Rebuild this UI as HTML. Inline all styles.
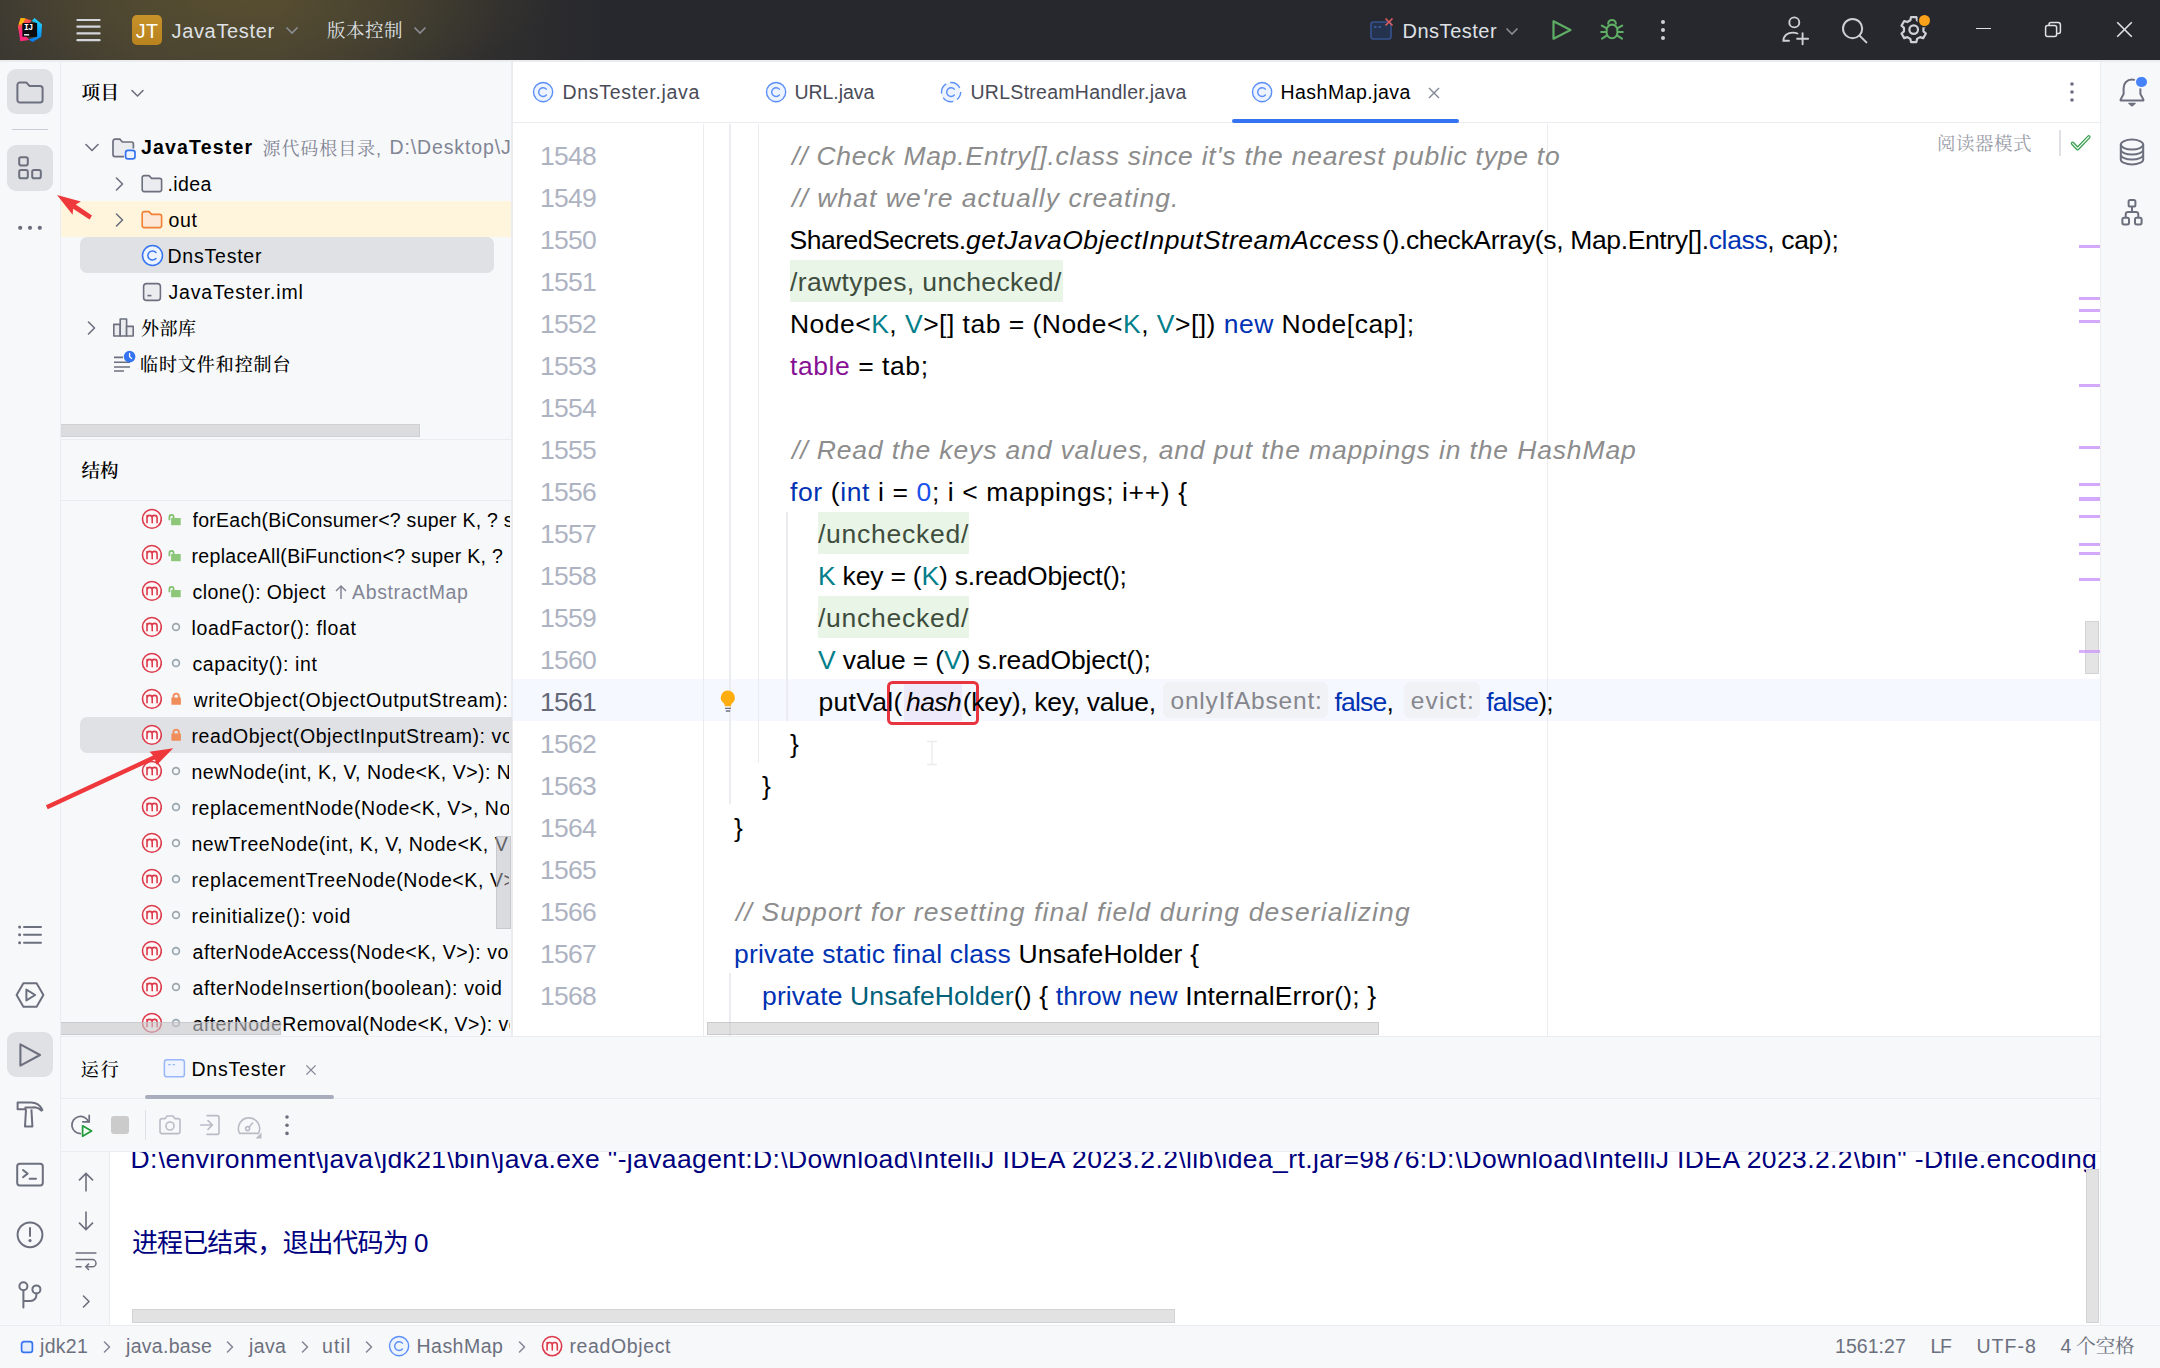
<!DOCTYPE html>
<html lang="zh-CN"><head><meta charset="utf-8"><title>JavaTester – HashMap.java</title><style>
*{margin:0;padding:0;box-sizing:border-box}
html,body{width:2160px;height:1368px;overflow:hidden;background:#f7f8fa}
body{position:relative;font-family:"Liberation Sans","Noto Serif CJK SC",sans-serif}
div,svg,span.t{position:absolute}
span.t{white-space:pre;line-height:1;display:block}
</style></head>
<body>
<div style="left:0px;top:0px;width:2160px;height:60px;background:#27282e;background:radial-gradient(ellipse 310px 85px at 245px 0,rgba(110,96,48,.42),rgba(110,96,48,0) 100%),linear-gradient(90deg,#3b3832 0,#464131 140px,#474131 280px,#3c3930 390px,#2f2e2e 500px,#27282e 610px)"></div>
<div style="left:0px;top:60px;width:2160px;height:1308px;background:#f7f8fa;"></div>
<div style="left:513px;top:61px;width:1587px;height:975px;background:#fff;"></div>
<div style="left:0px;top:60px;width:2160px;height:1.5px;background:#ebecf0;"></div>
<div style="left:60px;top:61px;width:1px;height:1264px;background:#ebecf0;"></div>
<div style="left:511px;top:61px;width:1.5px;height:975px;background:#ebecf0;"></div>
<div style="left:2099.5px;top:61px;width:1.5px;height:1264px;background:#ebecf0;"></div>
<div style="left:513px;top:122px;width:1587px;height:1px;background:#ebecf0;"></div>
<div style="left:61px;top:1035.5px;width:2039px;height:1.5px;background:#ebecf0;"></div>
<div style="left:0px;top:1324.5px;width:2160px;height:1.5px;background:#ebecf0;"></div>
<div style="left:61px;top:439px;width:450px;height:1px;background:#ebecf0;"></div>
<div style="left:61px;top:500px;width:450px;height:1px;background:#ebecf0;"></div>
<div style="left:61px;top:1098px;width:2039px;height:1px;background:#ebecf0;"></div>
<div style="left:61px;top:1151px;width:2039px;height:1px;background:#ebecf0;"></div>
<div style="left:110px;top:1152px;width:1989.5px;height:172.5px;background:#fff;"></div>
<div style="left:109px;top:1152px;width:1px;height:172.5px;background:#ebecf0;"></div>
<svg style="left:17px;top:17px;" width="26" height="26" viewBox="0 0 26 26" fill="none"><defs><linearGradient id="lgA" x1="0" y1="0" x2=".35" y2="1"><stop offset="0" stop-color="#fdb60d"/><stop offset=".28" stop-color="#ff5a3c"/><stop offset=".55" stop-color="#fe2a78"/><stop offset="1" stop-color="#f61f9c"/></linearGradient>
<linearGradient id="lgB" x1=".6" y1="0" x2=".3" y2="1"><stop offset="0" stop-color="#1fd7ff"/><stop offset=".55" stop-color="#0c9bfa"/><stop offset="1" stop-color="#087cfa"/></linearGradient></defs>
<polygon points="3.8,0.9 8.4,1.6 14.7,3.4 12,6.4 5.6,6.4 5.6,19.6 3.2,24.2 2.2,16.4 0.9,9.7" fill="url(#lgA)"/>
<polygon points="3.8,0.9 8.4,1.6 5.2,7.4 1.6,7.6" fill="#fdb60d"/>
<polygon points="14.6,4 17.6,0.9 25,7.6 24.2,19.7 15.5,25 11.6,22.6 19.8,19.8 19.8,6" fill="url(#lgB)"/>
<polygon points="3,24.2 5.6,15.8 12.4,23" fill="#fe2a78"/>
<rect x="5.4" y="6" width="14.7" height="13.8" fill="#0b0b10"/>
<rect x="7" y="17" width="5.2" height="1.6" fill="#dcdce0"/></svg>
<span class="t" style="left:24.00px;top:24.46px;font-size:8.2px;color:#fff;font-family:'Liberation Mono',monospace;font-weight:700;letter-spacing:-.7px">IJ</span>
<svg style="left:75px;top:18px;" width="27" height="24" viewBox="0 0 27 24" fill="none"><path d="M2.4 2H24.6M2.4 8.7H24.6M2.4 15.4H24.6M2.4 22.2H24.6" stroke="#d3d5db" stroke-width="2.2" stroke-linecap="round"/></svg>
<div style="left:132px;top:15px;width:30px;height:30px;background:#c08a22;border-radius:5px;background:linear-gradient(180deg,#c6922a,#b8821e)"></div>
<span class="t" style="left:135.80px;top:21.61px;font-size:19.6px;color:#fff;letter-spacing:.4px">JT</span>
<span class="t" style="left:171.50px;top:21.07px;font-size:20px;color:#dfe1e5;letter-spacing:0.660px;">JavaTester</span>
<svg style="left:285px;top:26px;" width="14" height="9" viewBox="0 0 14 9" fill="none"><path d="M1.5 1.5L7 7L12.5 1.5" stroke="#8b8d95" stroke-width="1.6"/></svg>
<span class="t" style="left:327.00px;top:22.34px;font-size:18.5px;color:#dfe1e5;letter-spacing:0.498px;">版本控制</span>
<svg style="left:413px;top:26px;" width="14" height="9" viewBox="0 0 14 9" fill="none"><path d="M1.5 1.5L7 7L12.5 1.5" stroke="#8b8d95" stroke-width="1.6"/></svg>
<svg style="left:1369px;top:17px;" width="26" height="24" viewBox="0 0 26 24" fill="none"><rect x="2" y="5" width="20" height="17" rx="2.5" fill="#25324d" stroke="#35538f" stroke-width="1.6"/>
<path d="M5 10H7.5M9.5 10H12" stroke="#3f64ad" stroke-width="1.3"/>
<path d="M16.5 1.5L23.5 8.5M23.5 1.5L16.5 8.5" stroke="#db5c5c" stroke-width="1.7"/></svg>
<span class="t" style="left:1402.50px;top:21.07px;font-size:20px;color:#dfe1e5;letter-spacing:0.515px;">DnsTester</span>
<svg style="left:1505px;top:27px;" width="14" height="9" viewBox="0 0 14 9" fill="none"><path d="M1.5 1.5L7 7L12.5 1.5" stroke="#8b8d95" stroke-width="1.6"/></svg>
<svg style="left:1550px;top:18px;" width="24" height="24" viewBox="0 0 24 24" fill="none"><path d="M3.5 3.2V20.8L20.5 12Z" stroke="#5fad65" stroke-width="2.2" stroke-linejoin="round"/></svg>
<svg style="left:1599px;top:17px;" width="26" height="26" viewBox="0 0 26 26" fill="none"><g stroke="#5fad65" stroke-width="2.1" stroke-linecap="round">
<path d="M9.2 6.8a3.8 3.8 0 0 1 7.6 0"/>
<rect x="7.6" y="7.6" width="10.8" height="13.6" rx="5.4"/>
<path d="M7.4 11.2L2.8 8.6M18.6 11.2L23.2 8.6M7.2 15H2.2M18.8 15H23.8M7.6 18.6L3 21.6M18.4 18.6L23 21.6"/></g></svg>
<svg style="left:1659px;top:18px;" width="8" height="24" viewBox="0 0 8 24" fill="none"><g fill="#ced0d6"><circle cx="4" cy="4" r="2"/><circle cx="4" cy="12" r="2"/><circle cx="4" cy="20" r="2"/></g></svg>
<svg style="left:1781px;top:15px;" width="30" height="31" viewBox="0 0 30 31" fill="none"><g stroke="#ced0d6" stroke-width="1.9" stroke-linecap="round"><circle cx="13.3" cy="7.4" r="5"/>
<path d="M8 25.8H2.4c0-5 4.2-8.2 9.4-8.2 1.7 0 3.3.3 4.7.9"/><path d="M21.6 18.2V29.2M16.1 23.7H27.1"/></g></svg>
<svg style="left:1840px;top:16px;" width="30" height="30" viewBox="0 0 30 30" fill="none"><g stroke="#ced0d6" stroke-width="2" stroke-linecap="round"><circle cx="12.6" cy="12.6" r="9.6"/><path d="M19.6 19.6L26.4 26.4"/></g></svg>
<svg style="left:1899px;top:15px;" width="30" height="30" viewBox="0 0 30 30" fill="none"><g stroke="#ced0d6" stroke-width="2.2" stroke-linejoin="round"><path d="M12.04 2.08L17.36 2.08L18.05 5.29L21.09 7.04L24.21 6.04L26.87 10.64L24.44 12.85L24.44 16.35L26.87 18.56L24.21 23.16L21.09 22.16L18.05 23.91L17.36 27.12L12.04 27.12L11.35 23.91L8.31 22.16L5.19 23.16L2.53 18.56L4.96 16.35L4.96 12.85L2.53 10.64L5.19 6.04L8.31 7.04L11.35 5.29Z"/><circle cx="14.7" cy="14.6" r="4.3"/></g></svg>
<div style="left:1918.5px;top:14.5px;width:11px;height:11px;background:#f9a11b;border-radius:50%;box-shadow:0 0 0 1.5px #27282e"></div>
<div style="left:1976px;top:28px;width:15px;height:1.4px;background:#dfe1e5;"></div>
<svg style="left:2044px;top:21px;" width="18" height="17" viewBox="0 0 18 17" fill="none"><g stroke="#dfe1e5" stroke-width="1.5"><rect x="1.6" y="4.4" width="11" height="11" rx="2"/><path d="M5 4.2V3.4a2 2 0 0 1 2-2H14a2.4 2.4 0 0 1 2.4 2.4V10.6a2 2 0 0 1-2 2H13"/></g></svg>
<svg style="left:2116px;top:21px;" width="17" height="17" viewBox="0 0 17 17" fill="none"><path d="M1.2 1.2L15.8 15.8M15.8 1.2L1.2 15.8" stroke="#dfe1e5" stroke-width="1.6"/></svg>
<div style="left:7px;top:69px;width:45.5px;height:45px;background:#dfe1e5;border-radius:9px"></div>
<svg style="left:15px;top:80px;" width="30" height="25" viewBox="0 0 30 25" fill="none"><path d="M2.4 5a2.6 2.6 0 0 1 2.6-2.6H11.2l3.4 3.6H25a2.6 2.6 0 0 1 2.6 2.6V20a2.6 2.6 0 0 1-2.6 2.6H5A2.6 2.6 0 0 1 2.4 20Z" stroke="#6c707e" stroke-width="2" stroke-linejoin="round"/></svg>
<div style="left:12px;top:129px;width:36px;height:1px;background:#c9ccd6;"></div>
<div style="left:7px;top:145px;width:45.5px;height:45.5px;background:#dfe1e5;border-radius:9px"></div>
<svg style="left:17px;top:155px;" width="26" height="26" viewBox="0 0 26 26" fill="none"><g stroke="#6c707e" stroke-width="2"><rect x="2.2" y="2.2" width="8.6" height="8.2" rx="1.8"/><rect x="2.2" y="15" width="8.6" height="8.2" rx="1.8"/><rect x="15.2" y="15" width="8.6" height="8.2" rx="1.8"/></g></svg>
<svg style="left:17px;top:224px;" width="26" height="8" viewBox="0 0 26 8" fill="none"><g fill="#6c707e"><circle cx="3.2" cy="3.8" r="2.1"/><circle cx="13" cy="3.8" r="2.1"/><circle cx="22.8" cy="3.8" r="2.1"/></g></svg>
<svg style="left:17px;top:923px;" width="28" height="24" viewBox="0 0 28 24" fill="none"><g stroke="#6c707e" stroke-width="2" stroke-linecap="round"><path d="M7 4H24M7 11.8H24M7 19.7H24"/></g><g fill="#6c707e"><circle cx="2.6" cy="4" r="1.5"/><circle cx="2.6" cy="11.8" r="1.5"/><circle cx="2.6" cy="19.7" r="1.5"/></g></svg>
<svg style="left:15px;top:981px;" width="30" height="28" viewBox="0 0 30 28" fill="none"><g stroke="#6c707e" stroke-width="2" stroke-linejoin="round"><path d="M1.6 14L8.4 2.2H21.6L28.4 14L21.6 25.8H8.4Z"/><path d="M11.4 8.6V19.4L20.2 14Z"/></g></svg>
<div style="left:7px;top:1032px;width:45.5px;height:45px;background:#dfe1e5;border-radius:9px"></div>
<svg style="left:17px;top:1041px;" width="26" height="28" viewBox="0 0 26 28" fill="none"><path d="M3.4 3.4V24.6L23 14Z" stroke="#6c707e" stroke-width="2.1" stroke-linejoin="round"/></svg>
<svg style="left:15px;top:1099px;" width="30" height="31" viewBox="0 0 30 31" fill="none"><g stroke="#6c707e" stroke-width="2" stroke-linejoin="round"><path d="M2.6 3.6H16c5.4 0 9.2 2.6 11.4 7.4l-1 .6c-2.4-2.6-5-3.4-8-3.4V8.4H10.4V10.2H2.6Z"/><path d="M11 10.4L10 27.6H17.4L16.4 10.4"/></g></svg>
<svg style="left:15px;top:1161px;" width="30" height="28" viewBox="0 0 30 28" fill="none"><g stroke="#6c707e" stroke-width="2" stroke-linejoin="round" stroke-linecap="round"><rect x="2.2" y="2.8" width="25.6" height="21.6" rx="2.6"/><path d="M8 9L12.6 12.6L8 16.2M14.6 17.8H21"/></g></svg>
<svg style="left:15px;top:1220px;" width="30" height="30" viewBox="0 0 30 30" fill="none"><g stroke="#6c707e" stroke-width="2" stroke-linecap="round"><circle cx="15" cy="14.8" r="12.4"/><path d="M15 8V16"/></g><circle cx="15" cy="20.6" r="1.6" fill="#6c707e"/></svg>
<svg style="left:15px;top:1279px;" width="30" height="32" viewBox="0 0 30 32" fill="none"><g stroke="#6c707e" stroke-width="2" stroke-linecap="round"><circle cx="8.4" cy="7.2" r="4"/><circle cx="21.4" cy="10.4" r="4"/><path d="M8.4 11.4V28.4M8.4 22H15.4c3.4 0 6-2.6 6-6V14.6"/></g></svg>
<svg style="left:2117px;top:76px;" width="32" height="34" viewBox="0 0 32 34" fill="none"><g stroke="#6c707e" stroke-width="2" stroke-linejoin="round" stroke-linecap="round"><path d="M15 3.6c-5 0-8.4 3.6-8.4 8.6V18L3.6 23.6V24.6H26.4V23.6L23.4 18V12.2C23.4 7.2 20 3.6 15 3.6Z"/></g><path d="M11.8 27.4H18.2L15 30Z" fill="#6c707e" stroke="#6c707e" stroke-width="1.2" stroke-linejoin="round"/></svg>
<div style="left:2136px;top:76.5px;width:10.8px;height:10.8px;background:#4682fa;border-radius:50%;box-shadow:0 0 0 1.5px #f7f8fa"></div>
<svg style="left:2118px;top:137px;" width="28" height="30" viewBox="0 0 28 30" fill="none"><g stroke="#6c707e" stroke-width="2"><ellipse cx="14" cy="7.6" rx="11.2" ry="5"/><path d="M2.8 7.6V22.4c0 2.8 5 5 11.2 5s11.2-2.2 11.2-5V7.6"/><path d="M2.8 12.6c0 2.8 5 5 11.2 5s11.2-2.2 11.2-5M2.8 17.6c0 2.8 5 5 11.2 5s11.2-2.2 11.2-5"/></g></svg>
<svg style="left:2119px;top:198px;" width="26" height="30" viewBox="0 0 26 30" fill="none"><g stroke="#6c707e" stroke-width="2"><rect x="9.6" y="2" width="6.8" height="6.6" rx="1.6"/><rect x="3.4" y="19.8" width="6.6" height="6.6" rx="1.6"/><rect x="16" y="19.8" width="6.6" height="6.6" rx="1.6"/><path d="M13 8.8V14M6.7 19.6V16.4a2.4 2.4 0 0 1 2.4-2.4H16.9a2.4 2.4 0 0 1 2.4 2.4V19.6"/></g></svg>
<span class="t" style="left:81.50px;top:83.84px;font-size:18.5px;color:#000;font-weight:600;letter-spacing:0.485px;">项目</span>
<svg style="left:131.0px;top:88.75px;" width="13" height="8.5" viewBox="0 0 13 8.5" fill="none"><path d="M1 1.5L6.5 7.0L12 1.5" stroke="#6c707e" stroke-width="1.6" stroke-linecap="round" stroke-linejoin="round"/></svg>
<div style="left:61px;top:201px;width:450px;height:36px;background:#fff4dc;"></div>
<div style="left:80px;top:237px;width:413.5px;height:35.5px;background:#dfe1e5;border-radius:7px"></div>
<svg style="left:85.0px;top:143.0px;" width="14" height="9.0" viewBox="0 0 14 9.0" fill="none"><path d="M1 1.5L7.0 7.5L13 1.5" stroke="#6c707e" stroke-width="1.6" stroke-linecap="round" stroke-linejoin="round"/></svg>
<svg style="left:111px;top:137px;" width="26" height="23" viewBox="0 0 26 23" fill="none"><path d="M22.4 11.6V7a2 2 0 0 0-2-2H11.4L8.8 2.2H4a2 2 0 0 0-2 2V17.6a2 2 0 0 0 2 2H13" stroke="#6c707e" stroke-width="1.7" fill="#ebecf0" stroke-linejoin="round"/><rect x="14.6" y="13.4" width="9.4" height="8.4" rx="2.4" stroke="#3574f0" fill="#edf3ff" stroke-width="1.7"/></svg>
<span class="t" style="left:141.00px;top:138.49px;font-size:19.5px;color:#000;font-weight:700;letter-spacing:1.181px;">JavaTester</span>
<span class="t" style="left:262.50px;top:139.76px;font-size:18px;color:#818594;letter-spacing:0.915px;">源代码根目录,</span>
<span class="t" style="left:389.50px;top:138.49px;font-size:19.5px;color:#818594;letter-spacing:0.875px;width:120.5px;overflow:hidden;">D:\Desktop\JavaTester</span>
<svg style="left:115.0px;top:176.5px;" width="9.0" height="14" viewBox="0 0 9.0 14" fill="none"><path d="M1.5 1L7.5 7.0L1.5 13" stroke="#6c707e" stroke-width="1.6" stroke-linecap="round" stroke-linejoin="round"/></svg>
<svg style="left:141px;top:173.5px;" width="22" height="19" viewBox="0 0 22 19" fill="none"><path d="M1.2 3.6a2 2 0 0 1 2-2H8l2.6 2.8h8a2 2 0 0 1 2 2V15.6a2 2 0 0 1-2 2H3.2a2 2 0 0 1-2-2Z" stroke="#6c707e" fill="#ebecf0" stroke-width="1.6" stroke-linejoin="round"/></svg>
<span class="t" style="left:167.50px;top:174.99px;font-size:19.5px;color:#000;letter-spacing:0.390px;">.idea</span>
<svg style="left:115.0px;top:212.5px;" width="9.0" height="14" viewBox="0 0 9.0 14" fill="none"><path d="M1.5 1L7.5 7.0L1.5 13" stroke="#6c707e" stroke-width="1.6" stroke-linecap="round" stroke-linejoin="round"/></svg>
<svg style="left:141px;top:209.5px;" width="22" height="19" viewBox="0 0 22 19" fill="none"><path d="M1.2 3.6a2 2 0 0 1 2-2H8l2.6 2.8h8a2 2 0 0 1 2 2V15.6a2 2 0 0 1-2 2H3.2a2 2 0 0 1-2-2Z" stroke="#ee8133" fill="#fde8d8" stroke-width="1.6" stroke-linejoin="round"/></svg>
<span class="t" style="left:168.50px;top:210.99px;font-size:19.5px;color:#000;letter-spacing:0.654px;">out</span>
<svg style="left:140.5px;top:243.7px;" width="23" height="23" viewBox="0 0 23 23" fill="none"><circle cx="11.5" cy="11.5" r="10" stroke="#3574f0" stroke-width="1.5" fill="#edf3ff"/><path d="M14.90 8.42A4.6 4.6 0 1 0 14.90 14.58" stroke="#3574f0" stroke-width="1.5" stroke-linecap="round"/></svg>
<span class="t" style="left:167.50px;top:246.99px;font-size:19.5px;color:#000;letter-spacing:0.776px;">DnsTester</span>
<svg style="left:142px;top:282px;" width="20" height="20" viewBox="0 0 20 20" fill="none"><rect x="1.6" y="1.6" width="16.8" height="16.8" rx="3" stroke="#6c707e" stroke-width="1.6" fill="#ebecf0"/><path d="M5.4 13.6H9.4" stroke="#6c707e" stroke-width="1.6"/></svg>
<span class="t" style="left:168.50px;top:282.99px;font-size:19.5px;color:#000;letter-spacing:0.829px;">JavaTester.iml</span>
<svg style="left:87.0px;top:320.5px;" width="9.0" height="14" viewBox="0 0 9.0 14" fill="none"><path d="M1.5 1L7.5 7.0L1.5 13" stroke="#6c707e" stroke-width="1.6" stroke-linecap="round" stroke-linejoin="round"/></svg>
<svg style="left:112px;top:317px;" width="23" height="21" viewBox="0 0 23 21" fill="none"><g stroke="#6c707e" stroke-width="1.6" fill="#ebecf0" stroke-linejoin="round"><path d="M1.8 7.4H8.2V19H1.8Z"/><path d="M8.2 2H14.6V19H8.2Z"/><path d="M14.6 9.4H21.2V19H14.6Z"/></g></svg>
<span class="t" style="left:141.00px;top:319.76px;font-size:18px;color:#000;font-weight:500;letter-spacing:0.500px;">外部库</span>
<svg style="left:112px;top:350px;" width="25" height="22" viewBox="0 0 25 22" fill="none"><g stroke="#6c707e" stroke-width="1.6"><path d="M2 7.4H11M2 12.2H18M2 17H18M2 21H12"/></g><circle cx="17.6" cy="6.6" r="5.8" fill="#3574f0"/><path d="M17.6 3.4V6.8L19.6 8.4" stroke="#fff" stroke-width="1.3" stroke-linecap="round"/></svg>
<span class="t" style="left:140.00px;top:355.76px;font-size:18px;color:#000;font-weight:500;letter-spacing:0.928px;">临时文件和控制台</span>
<div style="left:61px;top:423.5px;width:358.5px;height:13.5px;background:#dcdcde;border:1px solid #d0d0d3;border-left:0"></div>
<span class="t" style="left:81.50px;top:461.84px;font-size:18.5px;color:#000;font-weight:600;letter-spacing:-0.015px;">结构</span>
<div style="left:79.5px;top:717.2px;width:432.5px;height:35.8px;background:#dfe1e5;border-radius:7px 0 0 7px"></div>
<svg style="left:140.7px;top:508.0px;" width="21.8" height="21.8" viewBox="0 0 21.8 21.8" fill="none"><circle cx="10.9" cy="10.9" r="9.4" stroke="#db3b4b" stroke-width="1.6" fill="#fff7f7"/><path d="M6.012 14.66V7.516M6.012 9.96a2.6 2.6 0 0 1 5.2 0V14.66M10.9 9.96a2.6 2.6 0 0 1 5.2 0V14.66" stroke="#db3b4b" stroke-width="1.6" stroke-linecap="round" transform="scale(1)"/></svg>
<svg style="left:168px;top:510.5px;" width="16" height="18" viewBox="0 0 16 18" fill="none"><path d="M1.4 9.2V5.9a2.1 2.1 0 0 1 4.2 0V7.2" stroke="#7dc06a" stroke-width="1.7"/><rect x="3.1" y="7" width="9.6" height="7.2" fill="#8ec77a"/></svg>
<span class="t" style="left:192.50px;top:511.49px;font-size:19.5px;color:#000;letter-spacing:0.261px;width:317.6px;overflow:hidden;">forEach(BiConsumer&lt;? super K, ? super V&gt;): void</span>
<svg style="left:140.7px;top:544.0px;" width="21.8" height="21.8" viewBox="0 0 21.8 21.8" fill="none"><circle cx="10.9" cy="10.9" r="9.4" stroke="#db3b4b" stroke-width="1.6" fill="#fff7f7"/><path d="M6.012 14.66V7.516M6.012 9.96a2.6 2.6 0 0 1 5.2 0V14.66M10.9 9.96a2.6 2.6 0 0 1 5.2 0V14.66" stroke="#db3b4b" stroke-width="1.6" stroke-linecap="round" transform="scale(1)"/></svg>
<svg style="left:168px;top:546.5px;" width="16" height="18" viewBox="0 0 16 18" fill="none"><path d="M1.4 9.2V5.9a2.1 2.1 0 0 1 4.2 0V7.2" stroke="#7dc06a" stroke-width="1.7"/><rect x="3.1" y="7" width="9.6" height="7.2" fill="#8ec77a"/></svg>
<span class="t" style="left:191.50px;top:547.49px;font-size:19.5px;color:#000;letter-spacing:0.320px;width:317.6px;overflow:hidden;">replaceAll(BiFunction&lt;? super K, ? super V, ? extends V&gt;): void</span>
<svg style="left:140.7px;top:580.0px;" width="21.8" height="21.8" viewBox="0 0 21.8 21.8" fill="none"><circle cx="10.9" cy="10.9" r="9.4" stroke="#db3b4b" stroke-width="1.6" fill="#fff7f7"/><path d="M6.012 14.66V7.516M6.012 9.96a2.6 2.6 0 0 1 5.2 0V14.66M10.9 9.96a2.6 2.6 0 0 1 5.2 0V14.66" stroke="#db3b4b" stroke-width="1.6" stroke-linecap="round" transform="scale(1)"/></svg>
<svg style="left:168px;top:582.5px;" width="16" height="18" viewBox="0 0 16 18" fill="none"><path d="M1.4 9.2V5.9a2.1 2.1 0 0 1 4.2 0V7.2" stroke="#7dc06a" stroke-width="1.7"/><rect x="3.1" y="7" width="9.6" height="7.2" fill="#8ec77a"/></svg>
<span class="t" style="left:192.50px;top:583.49px;font-size:19.5px;color:#000;letter-spacing:0.436px;">clone(): Object</span>
<svg style="left:140.7px;top:616.0px;" width="21.8" height="21.8" viewBox="0 0 21.8 21.8" fill="none"><circle cx="10.9" cy="10.9" r="9.4" stroke="#db3b4b" stroke-width="1.6" fill="#fff7f7"/><path d="M6.012 14.66V7.516M6.012 9.96a2.6 2.6 0 0 1 5.2 0V14.66M10.9 9.96a2.6 2.6 0 0 1 5.2 0V14.66" stroke="#db3b4b" stroke-width="1.6" stroke-linecap="round" transform="scale(1)"/></svg>
<svg style="left:170px;top:620.8px;" width="12" height="12" viewBox="0 0 12 12" fill="none"><circle cx="6" cy="6" r="3.4" stroke="#9aa7b0" stroke-width="1.7"/></svg>
<span class="t" style="left:191.50px;top:619.49px;font-size:19.5px;color:#000;letter-spacing:0.645px;">loadFactor(): float</span>
<svg style="left:140.7px;top:652.0px;" width="21.8" height="21.8" viewBox="0 0 21.8 21.8" fill="none"><circle cx="10.9" cy="10.9" r="9.4" stroke="#db3b4b" stroke-width="1.6" fill="#fff7f7"/><path d="M6.012 14.66V7.516M6.012 9.96a2.6 2.6 0 0 1 5.2 0V14.66M10.9 9.96a2.6 2.6 0 0 1 5.2 0V14.66" stroke="#db3b4b" stroke-width="1.6" stroke-linecap="round" transform="scale(1)"/></svg>
<svg style="left:170px;top:656.8px;" width="12" height="12" viewBox="0 0 12 12" fill="none"><circle cx="6" cy="6" r="3.4" stroke="#9aa7b0" stroke-width="1.7"/></svg>
<span class="t" style="left:192.50px;top:655.49px;font-size:19.5px;color:#000;letter-spacing:0.604px;">capacity(): int</span>
<svg style="left:140.7px;top:688.0px;" width="21.8" height="21.8" viewBox="0 0 21.8 21.8" fill="none"><circle cx="10.9" cy="10.9" r="9.4" stroke="#db3b4b" stroke-width="1.6" fill="#fff7f7"/><path d="M6.012 14.66V7.516M6.012 9.96a2.6 2.6 0 0 1 5.2 0V14.66M10.9 9.96a2.6 2.6 0 0 1 5.2 0V14.66" stroke="#db3b4b" stroke-width="1.6" stroke-linecap="round" transform="scale(1)"/></svg>
<svg style="left:169px;top:690.5px;" width="14" height="18" viewBox="0 0 14 18" fill="none"><path d="M4.45 7V5.3a2.7 2.7 0 0 1 5.4 0V7" stroke="#f08d5a" stroke-width="1.9"/><rect x="2.4" y="6.6" width="9.5" height="7.2" rx=".5" fill="#f08d5a"/></svg>
<span class="t" style="left:193.50px;top:691.49px;font-size:19.5px;color:#000;letter-spacing:0.669px;width:317.6px;overflow:hidden;">writeObject(ObjectOutputStream): void</span>
<svg style="left:140.7px;top:724.0px;" width="21.8" height="21.8" viewBox="0 0 21.8 21.8" fill="none"><circle cx="10.9" cy="10.9" r="9.4" stroke="#db3b4b" stroke-width="1.6" fill="#fff7f7"/><path d="M6.012 14.66V7.516M6.012 9.96a2.6 2.6 0 0 1 5.2 0V14.66M10.9 9.96a2.6 2.6 0 0 1 5.2 0V14.66" stroke="#db3b4b" stroke-width="1.6" stroke-linecap="round" transform="scale(1)"/></svg>
<svg style="left:169px;top:726.5px;" width="14" height="18" viewBox="0 0 14 18" fill="none"><path d="M4.45 7V5.3a2.7 2.7 0 0 1 5.4 0V7" stroke="#f08d5a" stroke-width="1.9"/><rect x="2.4" y="6.6" width="9.5" height="7.2" rx=".5" fill="#f08d5a"/></svg>
<span class="t" style="left:191.50px;top:727.49px;font-size:19.5px;color:#000;letter-spacing:0.591px;width:317.6px;overflow:hidden;">readObject(ObjectInputStream): void</span>
<svg style="left:140.7px;top:760.0px;" width="21.8" height="21.8" viewBox="0 0 21.8 21.8" fill="none"><circle cx="10.9" cy="10.9" r="9.4" stroke="#db3b4b" stroke-width="1.6" fill="#fff7f7"/><path d="M6.012 14.66V7.516M6.012 9.96a2.6 2.6 0 0 1 5.2 0V14.66M10.9 9.96a2.6 2.6 0 0 1 5.2 0V14.66" stroke="#db3b4b" stroke-width="1.6" stroke-linecap="round" transform="scale(1)"/></svg>
<svg style="left:170px;top:764.8px;" width="12" height="12" viewBox="0 0 12 12" fill="none"><circle cx="6" cy="6" r="3.4" stroke="#9aa7b0" stroke-width="1.7"/></svg>
<span class="t" style="left:191.50px;top:763.49px;font-size:19.5px;color:#000;letter-spacing:0.485px;width:317.6px;overflow:hidden;">newNode(int, K, V, Node&lt;K, V&gt;): Node&lt;K, V&gt;</span>
<svg style="left:140.7px;top:796.0px;" width="21.8" height="21.8" viewBox="0 0 21.8 21.8" fill="none"><circle cx="10.9" cy="10.9" r="9.4" stroke="#db3b4b" stroke-width="1.6" fill="#fff7f7"/><path d="M6.012 14.66V7.516M6.012 9.96a2.6 2.6 0 0 1 5.2 0V14.66M10.9 9.96a2.6 2.6 0 0 1 5.2 0V14.66" stroke="#db3b4b" stroke-width="1.6" stroke-linecap="round" transform="scale(1)"/></svg>
<svg style="left:170px;top:800.8px;" width="12" height="12" viewBox="0 0 12 12" fill="none"><circle cx="6" cy="6" r="3.4" stroke="#9aa7b0" stroke-width="1.7"/></svg>
<span class="t" style="left:191.50px;top:799.49px;font-size:19.5px;color:#000;letter-spacing:0.567px;width:317.6px;overflow:hidden;">replacementNode(Node&lt;K, V&gt;, Node&lt;K, V&gt;): Node&lt;K, V&gt;</span>
<svg style="left:140.7px;top:832.0px;" width="21.8" height="21.8" viewBox="0 0 21.8 21.8" fill="none"><circle cx="10.9" cy="10.9" r="9.4" stroke="#db3b4b" stroke-width="1.6" fill="#fff7f7"/><path d="M6.012 14.66V7.516M6.012 9.96a2.6 2.6 0 0 1 5.2 0V14.66M10.9 9.96a2.6 2.6 0 0 1 5.2 0V14.66" stroke="#db3b4b" stroke-width="1.6" stroke-linecap="round" transform="scale(1)"/></svg>
<svg style="left:170px;top:836.8px;" width="12" height="12" viewBox="0 0 12 12" fill="none"><circle cx="6" cy="6" r="3.4" stroke="#9aa7b0" stroke-width="1.7"/></svg>
<span class="t" style="left:191.50px;top:835.49px;font-size:19.5px;color:#000;letter-spacing:0.509px;width:317.6px;overflow:hidden;">newTreeNode(int, K, V, Node&lt;K, V&gt;): TreeNode&lt;K, V&gt;</span>
<svg style="left:140.7px;top:868.0px;" width="21.8" height="21.8" viewBox="0 0 21.8 21.8" fill="none"><circle cx="10.9" cy="10.9" r="9.4" stroke="#db3b4b" stroke-width="1.6" fill="#fff7f7"/><path d="M6.012 14.66V7.516M6.012 9.96a2.6 2.6 0 0 1 5.2 0V14.66M10.9 9.96a2.6 2.6 0 0 1 5.2 0V14.66" stroke="#db3b4b" stroke-width="1.6" stroke-linecap="round" transform="scale(1)"/></svg>
<svg style="left:170px;top:872.8px;" width="12" height="12" viewBox="0 0 12 12" fill="none"><circle cx="6" cy="6" r="3.4" stroke="#9aa7b0" stroke-width="1.7"/></svg>
<span class="t" style="left:191.50px;top:871.49px;font-size:19.5px;color:#000;letter-spacing:0.602px;width:317.6px;overflow:hidden;">replacementTreeNode(Node&lt;K, V&gt;, Node&lt;K, V&gt;): TreeNode&lt;K, V&gt;</span>
<svg style="left:140.7px;top:904.0px;" width="21.8" height="21.8" viewBox="0 0 21.8 21.8" fill="none"><circle cx="10.9" cy="10.9" r="9.4" stroke="#db3b4b" stroke-width="1.6" fill="#fff7f7"/><path d="M6.012 14.66V7.516M6.012 9.96a2.6 2.6 0 0 1 5.2 0V14.66M10.9 9.96a2.6 2.6 0 0 1 5.2 0V14.66" stroke="#db3b4b" stroke-width="1.6" stroke-linecap="round" transform="scale(1)"/></svg>
<svg style="left:170px;top:908.8px;" width="12" height="12" viewBox="0 0 12 12" fill="none"><circle cx="6" cy="6" r="3.4" stroke="#9aa7b0" stroke-width="1.7"/></svg>
<span class="t" style="left:191.50px;top:907.49px;font-size:19.5px;color:#000;letter-spacing:0.660px;">reinitialize(): void</span>
<svg style="left:140.7px;top:940.0px;" width="21.8" height="21.8" viewBox="0 0 21.8 21.8" fill="none"><circle cx="10.9" cy="10.9" r="9.4" stroke="#db3b4b" stroke-width="1.6" fill="#fff7f7"/><path d="M6.012 14.66V7.516M6.012 9.96a2.6 2.6 0 0 1 5.2 0V14.66M10.9 9.96a2.6 2.6 0 0 1 5.2 0V14.66" stroke="#db3b4b" stroke-width="1.6" stroke-linecap="round" transform="scale(1)"/></svg>
<svg style="left:170px;top:944.8px;" width="12" height="12" viewBox="0 0 12 12" fill="none"><circle cx="6" cy="6" r="3.4" stroke="#9aa7b0" stroke-width="1.7"/></svg>
<span class="t" style="left:192.50px;top:943.49px;font-size:19.5px;color:#000;letter-spacing:0.560px;width:317.6px;overflow:hidden;">afterNodeAccess(Node&lt;K, V&gt;): void</span>
<svg style="left:140.7px;top:976.0px;" width="21.8" height="21.8" viewBox="0 0 21.8 21.8" fill="none"><circle cx="10.9" cy="10.9" r="9.4" stroke="#db3b4b" stroke-width="1.6" fill="#fff7f7"/><path d="M6.012 14.66V7.516M6.012 9.96a2.6 2.6 0 0 1 5.2 0V14.66M10.9 9.96a2.6 2.6 0 0 1 5.2 0V14.66" stroke="#db3b4b" stroke-width="1.6" stroke-linecap="round" transform="scale(1)"/></svg>
<svg style="left:170px;top:980.8px;" width="12" height="12" viewBox="0 0 12 12" fill="none"><circle cx="6" cy="6" r="3.4" stroke="#9aa7b0" stroke-width="1.7"/></svg>
<span class="t" style="left:192.50px;top:979.49px;font-size:19.5px;color:#000;letter-spacing:0.622px;">afterNodeInsertion(boolean): void</span>
<svg style="left:140.7px;top:1012.0px;" width="21.8" height="21.8" viewBox="0 0 21.8 21.8" fill="none"><circle cx="10.9" cy="10.9" r="9.4" stroke="#db3b4b" stroke-width="1.6" fill="#fff7f7"/><path d="M6.012 14.66V7.516M6.012 9.96a2.6 2.6 0 0 1 5.2 0V14.66M10.9 9.96a2.6 2.6 0 0 1 5.2 0V14.66" stroke="#db3b4b" stroke-width="1.6" stroke-linecap="round" transform="scale(1)"/></svg>
<svg style="left:170px;top:1016.8px;" width="12" height="12" viewBox="0 0 12 12" fill="none"><circle cx="6" cy="6" r="3.4" stroke="#9aa7b0" stroke-width="1.7"/></svg>
<span class="t" style="left:192.50px;top:1015.49px;font-size:19.5px;color:#000;letter-spacing:0.448px;width:317.6px;overflow:hidden;">afterNodeRemoval(Node&lt;K, V&gt;): void</span>
<svg style="left:334px;top:583px;" width="14" height="18" viewBox="0 0 14 18" fill="none"><path d="M7 16V3M2 8L7 3L12 8" stroke="#818594" stroke-width="1.5"/></svg>
<span class="t" style="left:352.00px;top:583.49px;font-size:19.5px;color:#818594;letter-spacing:0.639px;">AbstractMap</span>
<div style="left:496px;top:836px;width:14.5px;height:93px;background:rgba(190,190,195,.5);border:1px solid rgba(170,170,178,.35)"></div>
<div style="left:61px;top:1021.5px;width:220px;height:13.5px;background:rgba(200,200,203,.6);border:1px solid rgba(190,190,195,.6);border-left:0"></div>
<svg style="left:50px;top:188px;" width="50" height="36" viewBox="0 0 50 36" fill="none"><polygon points="7,7 30.9,13.5 25.7,16.6 42,27.6 39.6,31.6 23.1,20.7 22.6,26.8" fill="#ee383b"/></svg>
<svg style="left:40px;top:740px;" width="145" height="75" viewBox="0 0 145 75" fill="none"><polygon points="5.9,65.2 113.1,15.6 109.6,11.8 133.2,8.2 116.8,25 114.9,19.6 7.7,69.2" fill="#ee383b"/></svg>
<svg style="left:531.9px;top:81.2px;" width="22.2" height="22.2" viewBox="0 0 22.2 22.2" fill="none"><circle cx="11.1" cy="11.1" r="9.6" stroke="#5a8ff7" stroke-width="1.4" fill="#edf3ff"/><path d="M14.36 8.15A4.4 4.4 0 1 0 14.36 14.05" stroke="#5a8ff7" stroke-width="1.4" stroke-linecap="round"/></svg>
<span class="t" style="left:562.50px;top:82.99px;font-size:19.5px;color:#494b57;letter-spacing:0.688px;">DnsTester.java</span>
<svg style="left:764.6px;top:81.2px;" width="22.2" height="22.2" viewBox="0 0 22.2 22.2" fill="none"><circle cx="11.1" cy="11.1" r="9.6" stroke="#5a8ff7" stroke-width="1.4" fill="#edf3ff"/><path d="M14.36 8.15A4.4 4.4 0 1 0 14.36 14.05" stroke="#5a8ff7" stroke-width="1.4" stroke-linecap="round"/></svg>
<span class="t" style="left:794.50px;top:82.99px;font-size:19.5px;color:#494b57;letter-spacing:-0.052px;">URL.java</span>
<svg style="left:939.6px;top:81.2px;" width="22.2" height="22.2" viewBox="0 0 22.2 22.2" fill="none"><circle cx="11.1" cy="11.1" r="9.6" stroke="#5a8ff7" stroke-width="1.4" fill="#edf3ff" stroke-dasharray="11.5 4.2" stroke-dashoffset="3"/><path d="M14.36 8.15A4.4 4.4 0 1 0 14.36 14.05" stroke="#5a8ff7" stroke-width="1.4" stroke-linecap="round"/></svg>
<span class="t" style="left:970.50px;top:82.99px;font-size:19.5px;color:#494b57;letter-spacing:0.279px;">URLStreamHandler.java</span>
<svg style="left:1250.6000000000001px;top:81.2px;" width="22.2" height="22.2" viewBox="0 0 22.2 22.2" fill="none"><circle cx="11.1" cy="11.1" r="9.6" stroke="#5a8ff7" stroke-width="1.4" fill="#edf3ff"/><path d="M14.36 8.15A4.4 4.4 0 1 0 14.36 14.05" stroke="#5a8ff7" stroke-width="1.4" stroke-linecap="round"/></svg>
<span class="t" style="left:1280.50px;top:82.99px;font-size:19.5px;color:#000;letter-spacing:0.472px;">HashMap.java</span>
<svg style="left:1427px;top:85.5px;" width="14" height="14" viewBox="0 0 14 14" fill="none"><path d="M2 2L12 12M12 2L2 12" stroke="#818594" stroke-width="1.4"/></svg>
<div style="left:1232px;top:118.5px;width:227px;height:4.5px;background:#3574f0;border-radius:2.5px"></div>
<svg style="left:2068px;top:80px;" width="8" height="24" viewBox="0 0 8 24" fill="none"><g fill="#6c707e"><circle cx="4" cy="4" r="1.8"/><circle cx="4" cy="12" r="1.8"/><circle cx="4" cy="20" r="1.8"/></g></svg>
<div style="left:513px;top:679px;width:1586.5px;height:42px;background:#f5f8fe;"></div>
<div style="left:702.6px;top:123.5px;width:1.5px;height:912px;background:#ebecf0;"></div>
<div style="left:1546.5px;top:123.5px;width:1.5px;height:912px;background:#ebecf0;"></div>
<div style="left:729.2px;top:123.5px;width:1.5px;height:680.5px;background:#ebecf0;"></div>
<div style="left:757.6px;top:123.5px;width:1.5px;height:639px;background:#ebecf0;"></div>
<div style="left:786px;top:512px;width:1.5px;height:208.5px;background:#ebecf0;"></div>
<div style="left:729.2px;top:973px;width:1.5px;height:62.5px;background:#ebecf0;"></div>
<span class="t" style="left:540.00px;top:142.87px;font-size:26.5px;color:#aeb3c2;font-family:'Liberation Sans','Noto Sans CJK SC',sans-serif;letter-spacing:-.73px">1548</span>
<span class="t" style="left:540.00px;top:184.87px;font-size:26.5px;color:#aeb3c2;font-family:'Liberation Sans','Noto Sans CJK SC',sans-serif;letter-spacing:-.73px">1549</span>
<span class="t" style="left:540.00px;top:226.87px;font-size:26.5px;color:#aeb3c2;font-family:'Liberation Sans','Noto Sans CJK SC',sans-serif;letter-spacing:-.73px">1550</span>
<span class="t" style="left:540.00px;top:268.87px;font-size:26.5px;color:#aeb3c2;font-family:'Liberation Sans','Noto Sans CJK SC',sans-serif;letter-spacing:-.73px">1551</span>
<span class="t" style="left:540.00px;top:310.87px;font-size:26.5px;color:#aeb3c2;font-family:'Liberation Sans','Noto Sans CJK SC',sans-serif;letter-spacing:-.73px">1552</span>
<span class="t" style="left:540.00px;top:352.87px;font-size:26.5px;color:#aeb3c2;font-family:'Liberation Sans','Noto Sans CJK SC',sans-serif;letter-spacing:-.73px">1553</span>
<span class="t" style="left:540.00px;top:394.87px;font-size:26.5px;color:#aeb3c2;font-family:'Liberation Sans','Noto Sans CJK SC',sans-serif;letter-spacing:-.73px">1554</span>
<span class="t" style="left:540.00px;top:436.87px;font-size:26.5px;color:#aeb3c2;font-family:'Liberation Sans','Noto Sans CJK SC',sans-serif;letter-spacing:-.73px">1555</span>
<span class="t" style="left:540.00px;top:478.87px;font-size:26.5px;color:#aeb3c2;font-family:'Liberation Sans','Noto Sans CJK SC',sans-serif;letter-spacing:-.73px">1556</span>
<span class="t" style="left:540.00px;top:520.87px;font-size:26.5px;color:#aeb3c2;font-family:'Liberation Sans','Noto Sans CJK SC',sans-serif;letter-spacing:-.73px">1557</span>
<span class="t" style="left:540.00px;top:562.87px;font-size:26.5px;color:#aeb3c2;font-family:'Liberation Sans','Noto Sans CJK SC',sans-serif;letter-spacing:-.73px">1558</span>
<span class="t" style="left:540.00px;top:604.87px;font-size:26.5px;color:#aeb3c2;font-family:'Liberation Sans','Noto Sans CJK SC',sans-serif;letter-spacing:-.73px">1559</span>
<span class="t" style="left:540.00px;top:646.87px;font-size:26.5px;color:#aeb3c2;font-family:'Liberation Sans','Noto Sans CJK SC',sans-serif;letter-spacing:-.73px">1560</span>
<span class="t" style="left:540.00px;top:688.87px;font-size:26.5px;color:#646879;font-family:'Liberation Sans','Noto Sans CJK SC',sans-serif;letter-spacing:-.73px">1561</span>
<span class="t" style="left:540.00px;top:730.87px;font-size:26.5px;color:#aeb3c2;font-family:'Liberation Sans','Noto Sans CJK SC',sans-serif;letter-spacing:-.73px">1562</span>
<span class="t" style="left:540.00px;top:772.87px;font-size:26.5px;color:#aeb3c2;font-family:'Liberation Sans','Noto Sans CJK SC',sans-serif;letter-spacing:-.73px">1563</span>
<span class="t" style="left:540.00px;top:814.87px;font-size:26.5px;color:#aeb3c2;font-family:'Liberation Sans','Noto Sans CJK SC',sans-serif;letter-spacing:-.73px">1564</span>
<span class="t" style="left:540.00px;top:856.87px;font-size:26.5px;color:#aeb3c2;font-family:'Liberation Sans','Noto Sans CJK SC',sans-serif;letter-spacing:-.73px">1565</span>
<span class="t" style="left:540.00px;top:898.87px;font-size:26.5px;color:#aeb3c2;font-family:'Liberation Sans','Noto Sans CJK SC',sans-serif;letter-spacing:-.73px">1566</span>
<span class="t" style="left:540.00px;top:940.87px;font-size:26.5px;color:#aeb3c2;font-family:'Liberation Sans','Noto Sans CJK SC',sans-serif;letter-spacing:-.73px">1567</span>
<span class="t" style="left:540.00px;top:982.87px;font-size:26.5px;color:#aeb3c2;font-family:'Liberation Sans','Noto Sans CJK SC',sans-serif;letter-spacing:-.73px">1568</span>
<div style="left:790px;top:260px;width:272.5px;height:41.5px;background:#e9f5e6;"></div>
<div style="left:818px;top:512px;width:151px;height:41.5px;background:#e9f5e6;"></div>
<div style="left:818px;top:596px;width:151px;height:41.5px;background:#e9f5e6;"></div>
<span class="t" style="left:792.00px;top:142.57px;font-size:26.5px;color:#8c8c8c;font-family:'Liberation Sans','Noto Sans CJK SC',sans-serif;font-style:italic;letter-spacing:0.767px;">// Check Map.Entry[].class since it&#x27;s the nearest public type to</span>
<span class="t" style="left:792.00px;top:184.57px;font-size:26.5px;color:#8c8c8c;font-family:'Liberation Sans','Noto Sans CJK SC',sans-serif;font-style:italic;letter-spacing:1.039px;">// what we&#x27;re actually creating.</span>
<span class="t" style="left:789.50px;top:226.57px;font-size:26.5px;color:#000;font-family:'Liberation Sans','Noto Sans CJK SC',sans-serif;letter-spacing:-0.465px;">SharedSecrets.</span>
<span class="t" style="left:966.00px;top:226.57px;font-size:26.5px;color:#000;font-family:'Liberation Sans','Noto Sans CJK SC',sans-serif;font-style:italic;letter-spacing:0.476px;">getJavaObjectInputStreamAccess</span>
<span class="t" style="left:1382.00px;top:226.57px;font-size:26.5px;color:#000;font-family:'Liberation Sans','Noto Sans CJK SC',sans-serif;letter-spacing:-0.362px;">().checkArray(s, Map.Entry[].<span style="color:#0033b3">class</span>, cap);</span>
<span class="t" style="left:790.00px;top:268.57px;font-size:26.5px;color:#3e4d3e;font-family:'Liberation Sans','Noto Sans CJK SC',sans-serif;letter-spacing:0.384px;">/rawtypes, unchecked/</span>
<span class="t" style="left:790.00px;top:310.57px;font-size:26.5px;color:#000;font-family:'Liberation Sans','Noto Sans CJK SC',sans-serif;letter-spacing:0.472px;">Node&lt;<span style="color:#007e8a">K</span>, <span style="color:#007e8a">V</span>&gt;[] tab = (Node&lt;<span style="color:#007e8a">K</span>, <span style="color:#007e8a">V</span>&gt;[]) <span style="color:#0033b3">new</span> Node[cap];</span>
<span class="t" style="left:790.00px;top:352.57px;font-size:26.5px;color:#000;font-family:'Liberation Sans','Noto Sans CJK SC',sans-serif;letter-spacing:0.557px;"><span style="color:#871094">table</span> = tab;</span>
<span class="t" style="left:792.00px;top:436.57px;font-size:26.5px;color:#8c8c8c;font-family:'Liberation Sans','Noto Sans CJK SC',sans-serif;font-style:italic;letter-spacing:0.859px;">// Read the keys and values, and put the mappings in the HashMap</span>
<span class="t" style="left:790.00px;top:478.57px;font-size:26.5px;color:#000;font-family:'Liberation Sans','Noto Sans CJK SC',sans-serif;letter-spacing:0.610px;"><span style="color:#0033b3">for</span> (<span style="color:#0033b3">int</span> i = <span style="color:#1750eb">0</span>; i &lt; mappings; i++) {</span>
<span class="t" style="left:818.00px;top:520.57px;font-size:26.5px;color:#3e4d3e;font-family:'Liberation Sans','Noto Sans CJK SC',sans-serif;letter-spacing:0.745px;">/unchecked/</span>
<span class="t" style="left:818.00px;top:562.57px;font-size:26.5px;color:#000;font-family:'Liberation Sans','Noto Sans CJK SC',sans-serif;letter-spacing:-0.210px;"><span style="color:#007e8a">K</span> key = (<span style="color:#007e8a">K</span>) s.readObject();</span>
<span class="t" style="left:818.00px;top:604.57px;font-size:26.5px;color:#3e4d3e;font-family:'Liberation Sans','Noto Sans CJK SC',sans-serif;letter-spacing:0.745px;">/unchecked/</span>
<span class="t" style="left:818.00px;top:646.57px;font-size:26.5px;color:#000;font-family:'Liberation Sans','Noto Sans CJK SC',sans-serif;letter-spacing:-0.128px;"><span style="color:#007e8a">V</span> value = (<span style="color:#007e8a">V</span>) s.readObject();</span>
<div style="left:903.5px;top:682px;width:58.5px;height:38.5px;background:#ede9fb;"></div>
<div style="left:887px;top:681px;width:91.5px;height:44px;background:transparent;border:3.8px solid #e8343e;border-radius:5.5px"></div>
<span class="t" style="left:818.50px;top:688.57px;font-size:26.5px;color:#000;font-family:'Liberation Sans','Noto Sans CJK SC',sans-serif;letter-spacing:0.302px;">putVal(</span>
<span class="t" style="left:906.00px;top:688.57px;font-size:26.5px;color:#000;font-family:'Liberation Sans','Noto Sans CJK SC',sans-serif;font-style:italic;letter-spacing:-0.578px;">hash</span>
<span class="t" style="left:962.75px;top:688.57px;font-size:26.5px;color:#000;font-family:'Liberation Sans','Noto Sans CJK SC',sans-serif;letter-spacing:-0.292px;">(key), key, value,</span>
<div style="left:1163px;top:682px;width:165px;height:36px;background:#f1f2f5;border-radius:6px"></div>
<span class="t" style="left:1170.50px;top:688.96px;font-size:24.5px;color:#85868d;font-family:'Liberation Sans','Noto Sans CJK SC',sans-serif;letter-spacing:0.806px;">onlyIfAbsent:</span>
<span class="t" style="left:1334.50px;top:688.57px;font-size:26.5px;color:#000;font-family:'Liberation Sans','Noto Sans CJK SC',sans-serif;letter-spacing:-0.819px;"><span style="color:#0033b3">false</span>,</span>
<div style="left:1403.75px;top:682px;width:76.25px;height:36px;background:#f1f2f5;border-radius:6px"></div>
<span class="t" style="left:1410.75px;top:688.96px;font-size:24.5px;color:#85868d;font-family:'Liberation Sans','Noto Sans CJK SC',sans-serif;letter-spacing:1.172px;">evict:</span>
<span class="t" style="left:1486.25px;top:688.57px;font-size:26.5px;color:#000;font-family:'Liberation Sans','Noto Sans CJK SC',sans-serif;letter-spacing:-0.781px;"><span style="color:#0033b3">false</span>);</span>
<span class="t" style="left:790.00px;top:730.57px;font-size:26.5px;color:#000;font-family:'Liberation Sans','Noto Sans CJK SC',sans-serif;">}</span>
<span class="t" style="left:762.00px;top:772.57px;font-size:26.5px;color:#000;font-family:'Liberation Sans','Noto Sans CJK SC',sans-serif;">}</span>
<span class="t" style="left:734.00px;top:814.57px;font-size:26.5px;color:#000;font-family:'Liberation Sans','Noto Sans CJK SC',sans-serif;">}</span>
<span class="t" style="left:736.00px;top:898.57px;font-size:26.5px;color:#8c8c8c;font-family:'Liberation Sans','Noto Sans CJK SC',sans-serif;font-style:italic;letter-spacing:1.141px;">// Support for resetting final field during deserializing</span>
<span class="t" style="left:734.00px;top:940.57px;font-size:26.5px;color:#000;font-family:'Liberation Sans','Noto Sans CJK SC',sans-serif;letter-spacing:0.173px;"><span style="color:#0033b3">private static final class</span> UnsafeHolder {</span>
<span class="t" style="left:762.00px;top:982.57px;font-size:26.5px;color:#000;font-family:'Liberation Sans','Noto Sans CJK SC',sans-serif;letter-spacing:0.138px;"><span style="color:#0033b3">private</span> <span style="color:#00627a">UnsafeHolder</span>() { <span style="color:#0033b3">throw new</span> InternalError(); }</span>
<svg style="left:719px;top:688.6px;" width="18" height="24" viewBox="0 0 18 24" fill="none"><path d="M9 1.4a7.2 7.2 0 0 0-4.3 12.9c.6.5 1 1.2 1 2V17.2h6.4v-1c0-.8.4-1.5 1-2A7.2 7.2 0 0 0 9 1.4Z" fill="#ffad0f"/><path d="M6 19.4H12M6.8 22H11.2" stroke="#6c707e" stroke-width="1.3"/></svg>
<svg style="left:924px;top:740px;" width="16" height="26" viewBox="0 0 16 26" fill="none"><path d="M3 1.5H13M8 1.5V24.5M3 24.5H13" stroke="#ebecee" stroke-width="1.3"/></svg>
<span class="t" style="left:1937.00px;top:135.34px;font-size:18.5px;color:#9a9da8;letter-spacing:0.499px;">阅读器模式</span>
<div style="left:2059px;top:130px;width:1.5px;height:26px;background:#dfe1e5;"></div>
<svg style="left:2069px;top:132px;" width="24" height="22" viewBox="0 0 24 22" fill="none"><path d="M3.6 11.4L8.6 16.6L19.8 5" stroke="#3c9f53" stroke-width="3.7" stroke-linecap="round" stroke-linejoin="round"/><path d="M3.6 11.4L8.6 16.6L19.8 5" stroke="#eefaf0" stroke-width="1.2" stroke-linecap="round" stroke-linejoin="round"/></svg>
<div style="left:2079px;top:244.5px;width:20.5px;height:3px;background:#d4a9fb;"></div>
<div style="left:2079px;top:297px;width:20.5px;height:3px;background:#d4a9fb;"></div>
<div style="left:2079px;top:309px;width:20.5px;height:3px;background:#d4a9fb;"></div>
<div style="left:2079px;top:319.5px;width:20.5px;height:3px;background:#d4a9fb;"></div>
<div style="left:2079px;top:384px;width:20.5px;height:3px;background:#d4a9fb;"></div>
<div style="left:2079px;top:445.5px;width:20.5px;height:3px;background:#d4a9fb;"></div>
<div style="left:2079px;top:483px;width:20.5px;height:3px;background:#d4a9fb;"></div>
<div style="left:2079px;top:497px;width:20.5px;height:4px;background:#d4a9fb;"></div>
<div style="left:2079px;top:514.5px;width:20.5px;height:3px;background:#d4a9fb;"></div>
<div style="left:2079px;top:543px;width:20.5px;height:3px;background:#d4a9fb;"></div>
<div style="left:2079px;top:552px;width:20.5px;height:3px;background:#d4a9fb;"></div>
<div style="left:2079px;top:577.5px;width:20.5px;height:3px;background:#d4a9fb;"></div>
<div style="left:2085px;top:620.5px;width:14.2px;height:53px;background:#e4e4e4;border:1px solid #d3d3d3"></div>
<div style="left:2079px;top:649.5px;width:20.5px;height:3px;background:rgba(203,150,250,.75);"></div>
<div style="left:707px;top:1021.5px;width:672px;height:13.5px;background:rgba(200,200,203,.55);border:1px solid rgba(170,170,178,.4)"></div>
<span class="t" style="left:80.80px;top:1061.26px;font-size:18px;color:#000;font-weight:500;letter-spacing:1.999px;">运行</span>
<svg style="left:163px;top:1057.8px;" width="23" height="21" viewBox="0 0 23 21" fill="none"><rect x="1.4" y="1.8" width="20" height="17" rx="2.6" fill="#eff4fe" stroke="#98b6f8" stroke-width="1.5"/><path d="M5.2 6.6H7.6M9.6 6.6H12" stroke="#98b6f8" stroke-width="1.3"/></svg>
<span class="t" style="left:191.50px;top:1060.49px;font-size:19.5px;color:#000;letter-spacing:0.776px;">DnsTester</span>
<svg style="left:304px;top:1062.5px;" width="14" height="14" viewBox="0 0 14 14" fill="none"><path d="M2.4 2.4L11.6 11.6M11.6 2.4L2.4 11.6" stroke="#818594" stroke-width="1.3"/></svg>
<div style="left:145px;top:1094.5px;width:188.5px;height:4px;background:#a8adbd;border-radius:2px"></div>
<svg style="left:69px;top:1111px;" width="26" height="28" viewBox="0 0 26 28" fill="none"><g stroke="#6c707e" stroke-width="1.7" stroke-linecap="round"><path d="M19.4 10.6A8.6 8.6 0 1 0 11.4 22.6"/><path d="M20.2 4.4V10.8H13.8"/></g><path d="M13.6 14.8V25.2L22.6 20Z" stroke="#219a3c" stroke-width="1.7" fill="#f2fcf3" stroke-linejoin="round"/></svg>
<div style="left:111.2px;top:1116px;width:17.6px;height:17.8px;background:#cbcbcb;border-radius:3px"></div>
<div style="left:144.5px;top:1110px;width:1.5px;height:30px;background:#dfe1e5;"></div>
<svg style="left:158px;top:1113px;" width="24" height="24" viewBox="0 0 24 24" fill="none"><g stroke="#b9bcc6" stroke-width="1.6" stroke-linejoin="round"><path d="M2 7.6a2 2 0 0 1 2-2H7.2L9 3H15L16.8 5.6H20a2 2 0 0 1 2 2V18.6a2 2 0 0 1-2 2H4a2 2 0 0 1-2-2Z"/><circle cx="12" cy="13" r="4"/></g></svg>
<svg style="left:198px;top:1113px;" width="24" height="24" viewBox="0 0 24 24" fill="none"><g stroke="#b9bcc6" stroke-width="1.6" stroke-linejoin="round" stroke-linecap="round"><path d="M9 2.6H19a2 2 0 0 1 2 2V19.4a2 2 0 0 1-2 2H9"/><path d="M2.6 12H14M10 7.6L14.4 12L10 16.4"/></g></svg>
<svg style="left:235px;top:1113px;" width="28" height="26" viewBox="0 0 28 26" fill="none"><g stroke="#b9bcc6" stroke-width="1.6" stroke-linecap="round"><path d="M4.6 20.4A10.6 10.6 0 1 1 23.4 20.4Z" stroke-linejoin="round"/><circle cx="12.6" cy="15.6" r="2"/><path d="M14 14.2L17.6 10"/></g><path d="M26.5 19.5V25.5H20.5Z" fill="#b9bcc6"/></svg>
<svg style="left:283px;top:1113px;" width="8" height="24" viewBox="0 0 8 24" fill="none"><g fill="#6c707e"><circle cx="4" cy="4" r="1.8"/><circle cx="4" cy="12.2" r="1.8"/><circle cx="4" cy="20.4" r="1.8"/></g></svg>
<svg style="left:77px;top:1171px;" width="18" height="22" viewBox="0 0 18 22" fill="none"><path d="M9 20.4V2.4M2 9.4L9 2.4L16 9.4" stroke="#6c707e" stroke-width="1.6"/></svg>
<svg style="left:77px;top:1210px;" width="18" height="22" viewBox="0 0 18 22" fill="none"><path d="M9 1.6V19.6M2 12.6L9 19.6L16 12.6" stroke="#6c707e" stroke-width="1.6"/></svg>
<svg style="left:74px;top:1250px;" width="24" height="22" viewBox="0 0 24 22" fill="none"><g stroke="#6c707e" stroke-width="1.5"><path d="M1.6 3H22.4M1.6 9.6H18.4a3.6 3.6 0 0 1 0 7.2H12M1.6 16.8H7.6"/><path d="M15 13.6L11.8 16.8L15 20"/></g></svg>
<svg style="left:81.75px;top:1294.5px;" width="8.5" height="13" viewBox="0 0 8.5 13" fill="none"><path d="M1.5 1L7.0 6.5L1.5 12" stroke="#6c707e" stroke-width="1.6" stroke-linecap="round" stroke-linejoin="round"/></svg>
<div style="left:110px;top:1152px;width:1987px;height:172px;overflow:hidden">
<span class="t" style="left:20.50px;top:-6.43px;font-size:26.5px;color:#00007f;font-family:'Liberation Sans','Noto Sans CJK SC',sans-serif;letter-spacing:0.380px;">D:\environment\java\jdk21\bin\java.exe &quot;-javaagent:D:\Download\IntelliJ IDEA 2023.2.2\lib\idea_rt.jar=9876:D:\Download\IntelliJ IDEA 2023.2.2\bin&quot; -Dfile.encoding=UTF-8 -Dsun.stdout.encoding=UTF-8 -Dsun.stderr.encoding=UTF-8 -classpath D:\Desktop\JavaTester\out\production\JavaTester DnsTester</span>
</div>
<span class="t" style="left:132.00px;top:1229.99px;font-size:26px;color:#00007f;font-family:'Liberation Sans','Noto Sans CJK SC',sans-serif;letter-spacing:-0.937px;">进程已结束，退出代码为 0</span>
<div style="left:132px;top:1309px;width:1043px;height:13.5px;background:#e2e2e3;border:1px solid #d3d3d5"></div>
<div style="left:2085.5px;top:1169px;width:13.5px;height:154px;background:#e2e2e3;border:1px solid #d3d3d5"></div>
<svg style="left:20px;top:1339px;" width="14" height="16" viewBox="0 0 14 16" fill="none"><rect x="1.6" y="2.6" width="10.8" height="10.8" rx="2.4" stroke="#3574f0" stroke-width="1.7" fill="#e7effd"/></svg>
<span class="t" style="left:40.00px;top:1336.99px;font-size:19.5px;color:#6c707e;letter-spacing:0.305px;">jdk21</span>
<svg style="left:103.0px;top:1340.5px;" width="8.0" height="12" viewBox="0 0 8.0 12" fill="none"><path d="M1.5 1L6.5 6.0L1.5 11" stroke="#818594" stroke-width="1.5" stroke-linecap="round" stroke-linejoin="round"/></svg>
<span class="t" style="left:126.00px;top:1336.99px;font-size:19.5px;color:#6c707e;letter-spacing:0.295px;">java.base</span>
<svg style="left:226.0px;top:1340.5px;" width="8.0" height="12" viewBox="0 0 8.0 12" fill="none"><path d="M1.5 1L6.5 6.0L1.5 11" stroke="#818594" stroke-width="1.5" stroke-linecap="round" stroke-linejoin="round"/></svg>
<span class="t" style="left:249.00px;top:1336.99px;font-size:19.5px;color:#6c707e;letter-spacing:0.357px;">java</span>
<svg style="left:301.0px;top:1340.5px;" width="8.0" height="12" viewBox="0 0 8.0 12" fill="none"><path d="M1.5 1L6.5 6.0L1.5 11" stroke="#818594" stroke-width="1.5" stroke-linecap="round" stroke-linejoin="round"/></svg>
<span class="t" style="left:322.00px;top:1336.99px;font-size:19.5px;color:#6c707e;letter-spacing:1.133px;">util</span>
<svg style="left:365.0px;top:1340.5px;" width="8.0" height="12" viewBox="0 0 8.0 12" fill="none"><path d="M1.5 1L6.5 6.0L1.5 11" stroke="#818594" stroke-width="1.5" stroke-linecap="round" stroke-linejoin="round"/></svg>
<svg style="left:387.9px;top:1335.2px;" width="22.2" height="22.2" viewBox="0 0 22.2 22.2" fill="none"><circle cx="11.1" cy="11.1" r="9.6" stroke="#5a8ff7" stroke-width="1.4" fill="#edf3ff"/><path d="M14.36 8.15A4.4 4.4 0 1 0 14.36 14.05" stroke="#5a8ff7" stroke-width="1.4" stroke-linecap="round"/></svg>
<span class="t" style="left:416.50px;top:1336.99px;font-size:19.5px;color:#6c707e;letter-spacing:0.481px;">HashMap</span>
<svg style="left:518.0px;top:1340.5px;" width="8.0" height="12" viewBox="0 0 8.0 12" fill="none"><path d="M1.5 1L6.5 6.0L1.5 11" stroke="#818594" stroke-width="1.5" stroke-linecap="round" stroke-linejoin="round"/></svg>
<svg style="left:540.9px;top:1335.2px;" width="22.2" height="22.2" viewBox="0 0 22.2 22.2" fill="none"><circle cx="11.1" cy="11.1" r="9.6" stroke="#db3b4b" stroke-width="1.6" fill="#fff7f7"/><path d="M6.108 14.94V7.644M6.108 10.14a2.6 2.6 0 0 1 5.2 0V14.94M11.1 10.14a2.6 2.6 0 0 1 5.2 0V14.94" stroke="#db3b4b" stroke-width="1.6" stroke-linecap="round" transform="scale(1)"/></svg>
<span class="t" style="left:569.50px;top:1336.99px;font-size:19.5px;color:#6c707e;letter-spacing:0.614px;">readObject</span>
<span class="t" style="left:1835.00px;top:1336.99px;font-size:19.5px;color:#6c707e;letter-spacing:0.059px;">1561:27</span>
<span class="t" style="left:1930.50px;top:1336.99px;font-size:19.5px;color:#6c707e;letter-spacing:-1.355px;">LF</span>
<span class="t" style="left:1976.50px;top:1336.99px;font-size:19.5px;color:#6c707e;letter-spacing:1.024px;">UTF-8</span>
<span class="t" style="left:2060.50px;top:1336.99px;font-size:19.5px;color:#6c707e;letter-spacing:-0.194px;">4 个空格</span>
</body></html>
